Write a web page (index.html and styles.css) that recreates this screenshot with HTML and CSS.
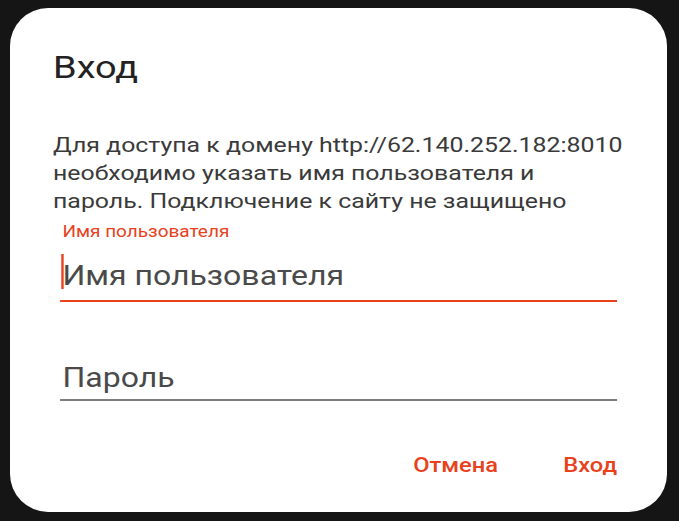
FILE: index.html
```html
<!DOCTYPE html>
<html lang="ru">
<head>
<meta charset="utf-8">
<title>Вход</title>
<link rel="stylesheet" href="styles.css">
</head>
<body>
<div class="dialog">
  <div class="content">
    <h1 class="title">Вход</h1>
    <p class="message">Для доступа к домену http://62.140.252.182:8010 необходимо указать имя пользователя и пароль. Подключение к сайту не защищено</p>
    <div class="field">
      <div class="label">Имя пользователя</div>
      <div class="input input-active"><span class="caret"></span><span class="placeholder">Имя пользователя</span></div>
    </div>
    <div class="field field-plain">
      <div class="input"><span class="placeholder">Пароль</span></div>
    </div>
    <div class="actions">
      <span class="btn">Отмена</span>
      <span class="btn">Вход</span>
    </div>
  </div>
</div>
</body>
</html>
```
FILE: styles.css
```css
html, body {
  margin: 0;
  padding: 0;
  background: #151515;
}
body {
  width: 679px;
  height: 521px;
  overflow: hidden;
  font-family: Roboto, "Noto Sans", sans-serif;
}
.dialog {
  box-sizing: border-box;
  margin: 8px 0 0 10px;
  width: 657px;
  height: 504px;
  background: #fff;
  border-radius: 38px;
  padding: 39px 0 0 43px;
}
.content {
  width: 476px;
  transform: scaleX(1.185);
  transform-origin: 0 0;
  display: flex;
  flex-direction: column;
}
.title {
  margin: 0;
  font-size: 32px;
  line-height: 40px;
  font-weight: 400;
  color: #222;
}
.message {
  margin: 44px -8px 0 0;
  font-size: 21px;
  line-height: 28px;
  color: #3a3a3a;
}
.field {
  margin-left: 6px;
}
.label {
  margin-top: 7px;
  font-size: 16px;
  line-height: 20px;
  color: #e8411c;
  padding-left: 2px;
}
.input {
  display: flex;
  align-items: flex-end;
  height: 60px;
  padding-bottom: 8px;
  box-sizing: border-box;
  border-bottom: 2px solid #7d7d7d;
  font-size: 27px;
  line-height: 32px;
  color: #4a4a4a;
  padding-left: 2px;
  position: relative;
}
.input-active {
  border-bottom-color: #e8411c;
}
.caret {
  position: absolute;
  left: 1px;
  top: 12px;
  width: 2px;
  height: 35px;
  background: #e8411c;
}
.field-plain {
  margin-top: 39px;
}
.field-plain .input {
  padding-bottom: 5px;
}
.actions {
  margin-top: 52px;
  display: flex;
  justify-content: flex-end;
  gap: 55px;
}
.btn {
  font-size: 20px;
  font-weight: 500;
  line-height: 24px;
  color: #e8411c;
}
```
